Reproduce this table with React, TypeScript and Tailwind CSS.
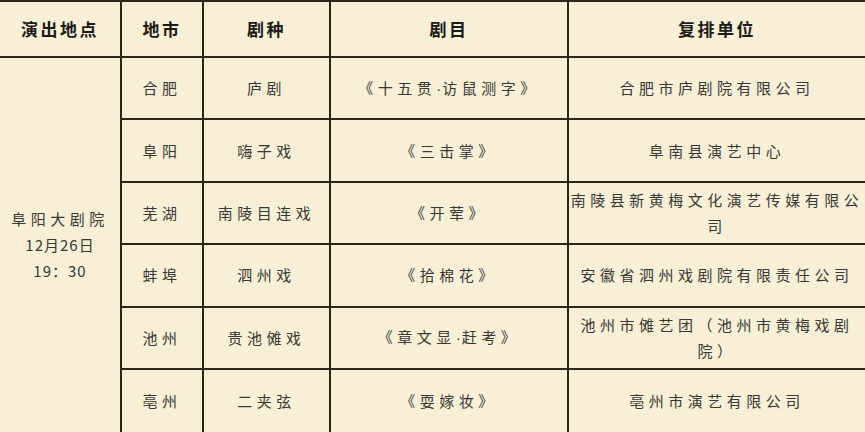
import { Fragment } from "react";

const headers = ["演出地点", "地市", "剧种", "剧目", "复排单位"];

const rows = [
  { city: "合肥", genre: "庐剧", play: "《十五贯·访鼠测字》", unit: "合肥市庐剧院有限公司" },
  { city: "阜阳", genre: "嗨子戏", play: "《三击掌》", unit: "阜南县演艺中心" },
  { city: "芜湖", genre: "南陵目连戏", play: "《开荤》", unit: "南陵县新黄梅文化演艺传媒有限公司" },
  { city: "蚌埠", genre: "泗州戏", play: "《拾棉花》", unit: "安徽省泗州戏剧院有限责任公司" },
  { city: "池州", genre: "贵池傩戏", play: "《章文显·赶考》", unit: "池州市傩艺团（池州市黄梅戏剧院）" },
  { city: "亳州", genre: "二夹弦", play: "《耍嫁妆》", unit: "亳州市演艺有限公司" },
];

const cell = "bg-[#f7efd6] flex items-center justify-center text-center";
const body = "text-[15px] tracking-[4.5px] leading-[26px] text-[#3a3833]";

// the narrow middle dot in play titles comes from a latin font
function Title({ text }: { text: string }) {
  const parts = text.split("·");
  return (
    <span>
      {parts.map((p, i) => (
        <Fragment key={i}>
          {i > 0 && (
            <span className="tracking-[1px]" style={{ fontFamily: '"Liberation Sans", sans-serif' }}>
              ·
            </span>
          )}
          {p}
        </Fragment>
      ))}
    </span>
  );
}

export default function App() {
  return (
    <div
      className="w-[865px] h-[432px] overflow-hidden bg-[#f7efd6]"
      style={{ fontFamily: '"Noto Sans CJK SC", "Noto Sans", sans-serif' }}
    >
      <div className="grid grid-cols-[120px_80px_125px_236px_296px] grid-rows-[54px_60.4px_60.4px_60.4px_60.4px_60.4px_62px] gap-[2px] pt-[2px] bg-[#2a2515]">
        {headers.map((h) => (
          <div key={h} className={`${cell} text-[17px] font-bold tracking-[2.5px] text-[#1c1a16]`}>
            {h}
          </div>
        ))}

        {/* venue cell spans all data rows */}
        <div className={`${cell} ${body} row-span-6 flex-col`}>
          <div>阜阳大剧院</div>
          <div className="tracking-[1px]">12月26日</div>
          <div className="tracking-[1px]">19：30</div>
        </div>

        {rows.map((r) => (
          <Fragment key={r.city}>
            <div className={`${cell} ${body}`}>{r.city}</div>
            <div className={`${cell} ${body}`}>{r.genre}</div>
            <div className={`${cell} ${body}`}>
              <Title text={r.play} />
            </div>
            <div className={`${cell} ${body}`}>{r.unit}</div>
          </Fragment>
        ))}
      </div>
    </div>
  );
}
